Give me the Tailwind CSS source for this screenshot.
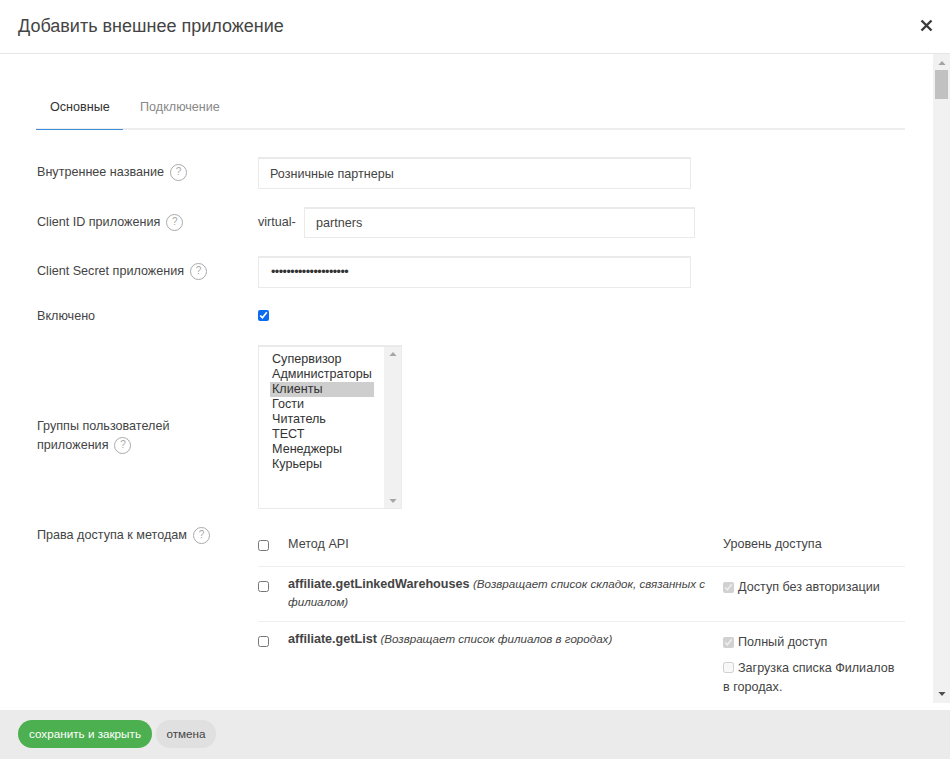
<!DOCTYPE html>
<html lang="ru">
<head>
<meta charset="utf-8">
<title>Добавить внешнее приложение</title>
<script src="https://cdn.jsdelivr.net/npm/@tailwindcss/browser@4"></script>
</head>
<body class="bg-white">
<div class="w-[950px] h-[759px] flex flex-col overflow-hidden bg-white font-['Liberation_Sans',Arial,sans-serif] text-[12.6px] text-[#444]">
  <header class="h-[54px] shrink-0 flex items-start justify-between pl-[18px] pr-[17px] border-b border-[#e5e5e5]">
    <h1 class="text-[18px] leading-[52px] text-[#444]">Добавить внешнее приложение</h1>
    <svg class="w-[13px] h-[13px] mt-[19px]" viewBox="0 0 13 13" aria-label="Закрыть"><path d="M1.5 1.5 L11.5 11.5 M11.5 1.5 L1.5 11.5" stroke="#3a3a3a" stroke-width="2.4" fill="none"/></svg>
  </header>
  <div class="h-[649px] shrink-0 flex">
    <main class="w-[933px] h-full overflow-hidden pl-[36px] pr-[28px] pt-[30px]">
      <nav class="flex h-[46px] border-b-2 border-[#eeeeee]">
        <div class="w-[87px] h-[46px] border-b border-[#3b8fd8] pl-[14px] pt-[16px] leading-[15px] text-[#333]">Основные</div>
        <div class="pl-[17px] pt-[16px] leading-[15px] text-[#888]">Подключение</div>
      </nav>
      <div class="flex items-center h-[32px] mt-[27px]">
        <label class="w-[222px] pl-px flex items-center h-[18px] -mt-[2px]"><span>Внутреннее название</span><i class="not-italic ml-[6px] w-[17px] h-[17px] rounded-full border border-[#aaa] text-[#aaa] text-[10px] leading-[14px] text-center">?</i></label>
        <div class="w-[433px] h-[32px] border border-t-2 border-[#eaeaea] pl-[11px] leading-[30px] text-[#444]">Розничные партнеры</div>
      </div>
      <div class="flex items-center h-[31px] mt-[18px]">
        <label class="w-[222px] pl-px flex items-center"><span>Client ID приложения</span><i class="not-italic ml-[6px] w-[17px] h-[17px] rounded-full border border-[#aaa] text-[#aaa] text-[10px] leading-[14px] text-center">?</i></label>
        <span class="w-[46px]">virtual-</span>
        <div class="w-[391px] h-[31px] border border-t-2 border-[#eaeaea] pl-[11px] leading-[29px]">partners</div>
      </div>
      <div class="flex items-center h-[32px] mt-[18px]">
        <label class="w-[222px] pl-px flex items-center h-[18px] -mt-[2px]"><span>Client Secret приложения</span><i class="not-italic ml-[6px] w-[17px] h-[17px] rounded-full border border-[#aaa] text-[#aaa] text-[10px] leading-[14px] text-center">?</i></label>
        <div class="w-[433px] h-[32px] border border-t-2 border-[#eaeaea] pl-[12px] leading-[28px] tracking-[-0.55px] text-[#333]">••••••••••••••••••••</div>
      </div>
      <div class="flex items-center h-[14px] mt-[20px]">
        <label class="w-[222px] pl-px leading-[16px] pt-[2px]">Включено</label>
        <input type="checkbox" checked class="w-[11px] h-[11px] accent-[#0b6cf0]">
      </div>
      <div class="flex items-center mt-[23px]">
        <label class="w-[222px] pl-px pt-[18px] leading-[19.5px]">Группы пользователей<br><span class="inline-flex items-center">приложения<i class="not-italic ml-[6px] w-[17px] h-[17px] rounded-full border border-[#aaa] text-[#aaa] text-[10px] leading-[14px] text-center">?</i></span></label>
        <div class="w-[144px] h-[164px] border border-t-2 border-[#eaeaea] flex">
          <ul class="flex-1 pt-[5px] pl-[11px] pr-[10px] leading-[15px] text-[#333]">
            <li class="pl-[2px]">Супервизор</li>
            <li class="pl-[2px]">Администраторы</li>
            <li class="pl-[2px] bg-[#cecece]">Клиенты</li>
            <li class="pl-[2px]">Гости</li>
            <li class="pl-[2px]">Читатель</li>
            <li class="pl-[2px]">ТЕСТ</li>
            <li class="pl-[2px]">Менеджеры</li>
            <li class="pl-[2px]">Курьеры</li>
          </ul>
          <div class="w-[17px] bg-[#f1f1f1] flex flex-col justify-between items-center py-[5px]">
            <svg class="w-[8px] h-[4px]" viewBox="0 0 9 5"><path d="M4.5 0 L9 5 L0 5 Z" fill="#a6a6a6"/></svg>
            <svg class="w-[8px] h-[4px]" viewBox="0 0 9 5"><path d="M0 0 L9 0 L4.5 5 Z" fill="#a6a6a6"/></svg>
          </div>
        </div>
      </div>
      <div class="flex mt-[17px]">
        <label class="w-[222px] shrink-0 pl-px flex items-center h-[18px]"><span>Права доступа к методам</span><i class="not-italic ml-[6px] w-[17px] h-[17px] rounded-full border border-[#aaa] text-[#aaa] text-[10px] leading-[14px] text-center">?</i></label>
        <div class="w-[647px]">
          <div class="flex h-[41px] border-b border-[#eeeeee] pt-[11px]">
            <div class="w-[30px] pt-[3px]"><input type="checkbox" class="block w-[11px] h-[11px]"></div>
            <div class="w-[435px] leading-[15px]">Метод API</div>
            <div class="leading-[15px]">Уровень доступа</div>
          </div>
          <div class="flex h-[55px] border-b border-[#eeeeee] pt-[8px]">
            <div class="w-[30px] pt-[6px]"><input type="checkbox" class="block w-[11px] h-[11px]"></div>
            <div class="w-[435px] pr-[15px] leading-[18px]"><b>affiliate.getLinkedWarehouses</b> <em class="text-[11.6px]">(Возвращает список складок, связанных с филиалом)</em></div>
            <div class="pt-[5px] leading-[15px] flex items-start"><input type="checkbox" checked disabled class="w-[11px] h-[11px] mt-[2px] mr-[4px]">Доступ без авторизации</div>
          </div>
          <div class="flex pt-[8px]">
            <div class="w-[30px] pt-[6px]"><input type="checkbox" class="block w-[11px] h-[11px]"></div>
            <div class="w-[435px] pr-[15px] leading-[18px]"><b>affiliate.getList</b> <em class="text-[11.6px]">(Возвращает список филиалов в городах)</em></div>
            <div class="w-[175px] pt-[5px] leading-[19px]">
              <div class="flex items-start leading-[15px]"><input type="checkbox" checked disabled class="w-[11px] h-[11px] mt-[2px] mr-[4px]">Полный доступ</div>
              <div class="mt-[9px]"><input type="checkbox" disabled class="inline-block w-[11px] h-[11px] mr-[4px] align-[-1px]">Загрузка списка Филиалов в городах.</div>
            </div>
          </div>
        </div>
      </div>
    </main>
    <div class="w-[17px] h-full bg-[#f1f1f1] flex flex-col items-center justify-between py-[7px]">
      <div class="flex flex-col items-center gap-[4px]">
        <svg class="w-[8px] h-[4px]" viewBox="0 0 9 5"><path d="M4.5 0 L9 5 L0 5 Z" fill="#a3a3a3"/></svg>
        <div class="w-[13px] h-[29px] bg-[#c1c1c1] mt-[1px]"></div>
      </div>
      <svg class="w-[8px] h-[4px]" viewBox="0 0 9 5"><path d="M0 0 L9 0 L4.5 5 Z" fill="#505050"/></svg>
    </div>
  </div>
  <div class="h-[7px] shrink-0"></div>
  <footer class="flex-1 bg-[#ebebeb] flex items-start gap-[4px] pl-[18px] pt-[10px]">
    <button class="w-[134px] h-[28px] rounded-full bg-[#4caf50] text-white text-[11.7px]">сохранить и закрыть</button>
    <button class="w-[60px] h-[28px] rounded-full bg-[#e0e0e0] text-[#444] text-[11.7px]">отмена</button>
  </footer>
</div>
</body>
</html>
